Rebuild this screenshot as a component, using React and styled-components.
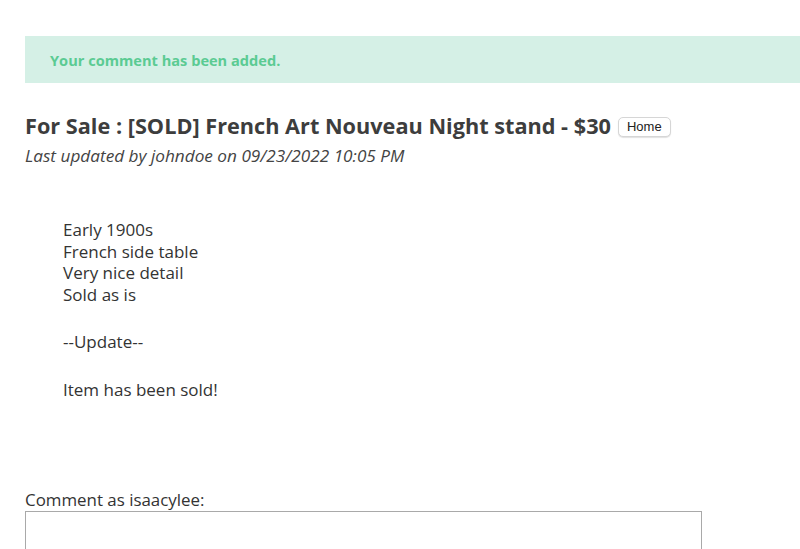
import React from "react";
import styled, { createGlobalStyle } from "styled-components";

const GlobalStyle = createGlobalStyle`
  html, body {
    margin: 0;
    padding: 0;
    background: #fff;
    font-family: "Open Sans", "Liberation Sans", sans-serif;
    color: #333;
    overflow: hidden;
  }
`;

const Page = styled.div`
  padding: 36px 0 0 25px;
`;

const Flash = styled.div`
  background-color: #d5f0e6;
  color: #5bcb93;
  font-weight: 700;
  font-size: 14.6px;
  height: 47px;
  display: flex;
  align-items: center;
  padding-left: 25px;
`;

const TitleRow = styled.div`
  display: flex;
  align-items: center;
  margin-top: 30px;
`;

const Title = styled.h1`
  margin: 0;
  font-size: 21.7px;
  font-weight: 700;
  color: #3d3d3d;
  line-height: 26px;
`;

const HomeButton = styled.button`
  margin-left: 7px;
  margin-top: 2px;
  font-family: "Liberation Sans", Arial, sans-serif;
  font-size: 13px;
  color: #222;
  background: #fff;
  border: 1px solid #d6d6d6;
  border-radius: 5px;
  box-shadow: 0 1px 1px rgba(0, 0, 0, 0.12);
  padding: 2px 8px;
  height: 20px;
  line-height: 14px;
`;

const Meta = styled.div`
  font-style: italic;
  font-size: 17.2px;
  color: #444;
  margin-top: 5px;
`;

const Body = styled.div`
  margin-top: 52px;
  padding-left: 38px;
  font-size: 17px;
  color: #333;
  line-height: 21.7px;
`;

const Para = styled.p`
  margin: 0 0 ${(p) => p.$gap || 25.5}px 0;
`;

const CommentLabel = styled.div`
  margin-top: 90px;
  font-size: 16.9px;
  color: #333;
  line-height: 20px;
`;

const CommentBox = styled.textarea`
  display: block;
  margin-top: 1px;
  width: 677px;
  height: 80px;
  box-sizing: border-box;
  border: 1px solid #a9a9a9;
  resize: none;
`;

export default function App() {
  return (
    <>
      <GlobalStyle />
      <Page>
        <Flash>Your comment has been added.</Flash>
        <TitleRow>
          <Title>For Sale : [SOLD] French Art Nouveau Night stand - $30</Title>
          <HomeButton>Home</HomeButton>
        </TitleRow>
        <Meta>Last updated by johndoe on 09/23/2022 10:05 PM</Meta>
        <Body>
          <Para>
            Early 1900s
            <br />
            French side table
            <br />
            Very nice detail
            <br />
            Sold as is
          </Para>
          <Para>--Update--</Para>
          <Para>Item has been sold!</Para>
        </Body>
        <CommentLabel>Comment as isaacylee:</CommentLabel>
        <CommentBox />
      </Page>
    </>
  );
}
